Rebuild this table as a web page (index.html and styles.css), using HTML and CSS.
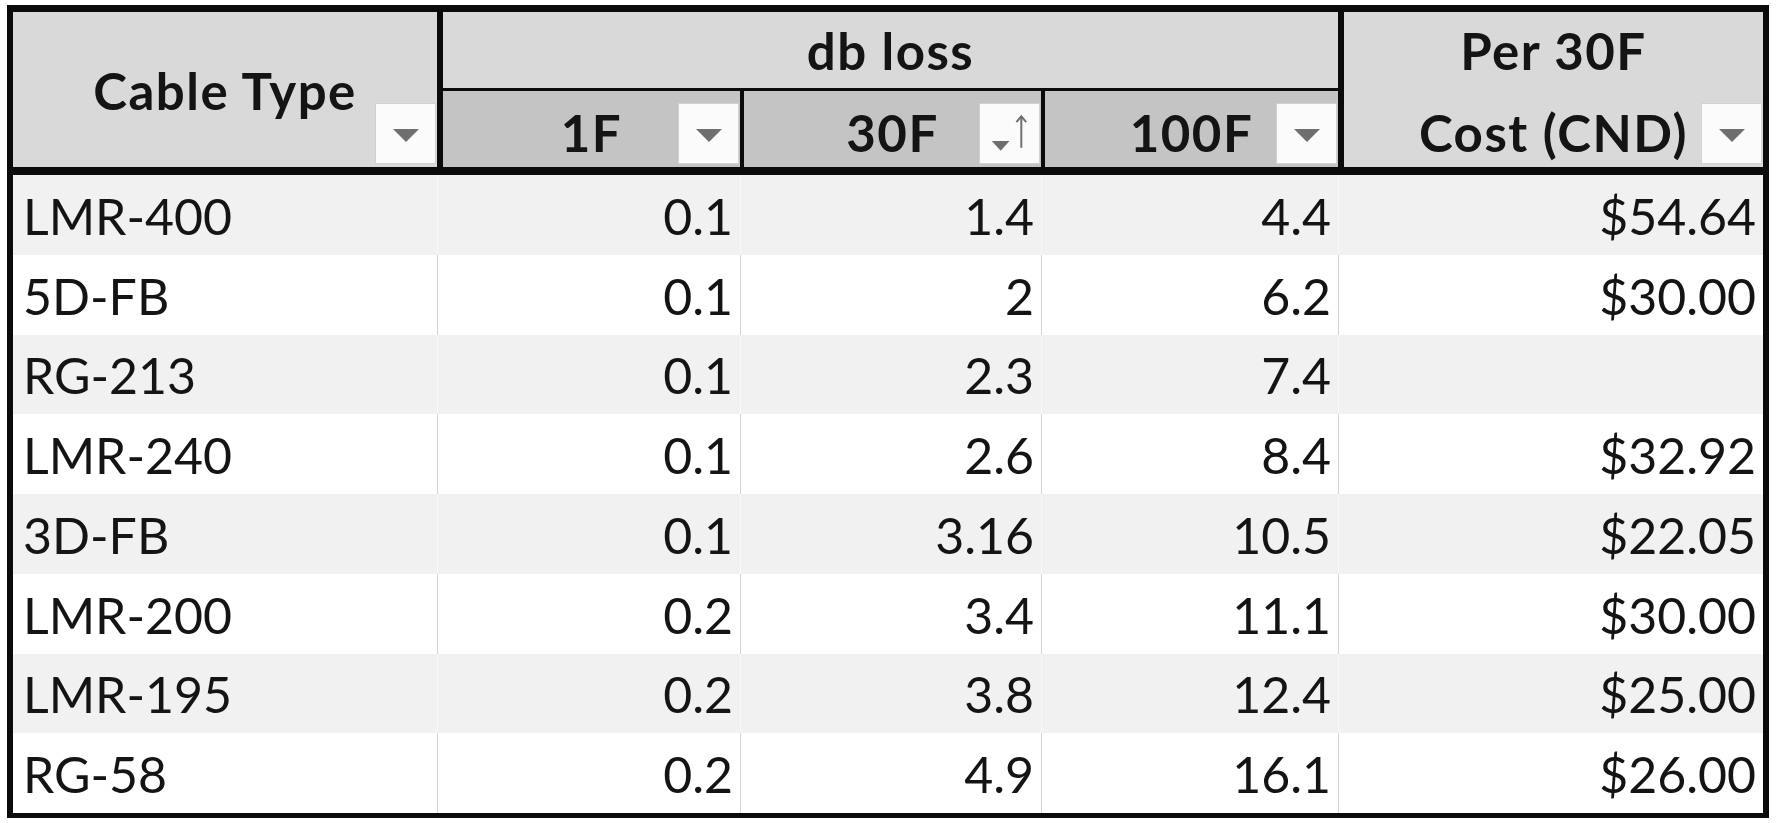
FILE: index.html
```html
<!DOCTYPE html>
<html lang="en">
<head>
<meta charset="utf-8">
<title>Cable loss table</title>
<link rel="stylesheet" href="styles.css">
</head>
<body>
<div class="sheet">
  <div class="tbl">
    <div class="head">
      <div class="h h-type">
        <span>Cable Type</span>
        <span class="filter"><svg class="tri" viewBox="0 0 26 13" width="26" height="13"><polygon points="0,0 26,0 13,13"/></svg></span>
      </div>
      <div class="h h-group">db loss</div>
      <div class="h h-sub h-first">
        <span>1F</span>
        <span class="filter"><svg class="tri" viewBox="0 0 26 13" width="26" height="13"><polygon points="0,0 26,0 13,13"/></svg></span>
      </div>
      <div class="h h-sub">
        <span>30F</span>
        <span class="filter"><svg class="sort" viewBox="0 0 60 61" width="60" height="61"><polygon points="12,38 30,38 21,48"/><line x1="42" y1="13" x2="42" y2="45"/><polyline points="37,19 42,13 47,19"/></svg></span>
      </div>
      <div class="h h-sub">
        <span>100F</span>
        <span class="filter"><svg class="tri" viewBox="0 0 26 13" width="26" height="13"><polygon points="0,0 26,0 13,13"/></svg></span>
      </div>
      <div class="h h-cost">
        <span>Per 30F<br>Cost (CND)</span>
        <span class="filter"><svg class="tri" viewBox="0 0 26 13" width="26" height="13"><polygon points="0,0 26,0 13,13"/></svg></span>
      </div>
    </div>
    <div class="body">
      <div class="row band"><div class="c name">LMR-400</div><div class="c num">0.1</div><div class="c num">1.4</div><div class="c num">4.4</div><div class="c num">$54.64</div></div>
      <div class="row"><div class="c name">5D-FB</div><div class="c num">0.1</div><div class="c num">2</div><div class="c num">6.2</div><div class="c num">$30.00</div></div>
      <div class="row band"><div class="c name">RG-213</div><div class="c num">0.1</div><div class="c num">2.3</div><div class="c num">7.4</div><div class="c num"></div></div>
      <div class="row"><div class="c name">LMR-240</div><div class="c num">0.1</div><div class="c num">2.6</div><div class="c num">8.4</div><div class="c num">$32.92</div></div>
      <div class="row band"><div class="c name">3D-FB</div><div class="c num">0.1</div><div class="c num">3.16</div><div class="c num">10.5</div><div class="c num">$22.05</div></div>
      <div class="row"><div class="c name">LMR-200</div><div class="c num">0.2</div><div class="c num">3.4</div><div class="c num">11.1</div><div class="c num">$30.00</div></div>
      <div class="row band"><div class="c name">LMR-195</div><div class="c num">0.2</div><div class="c num">3.8</div><div class="c num">12.4</div><div class="c num">$25.00</div></div>
      <div class="row"><div class="c name">RG-58</div><div class="c num">0.2</div><div class="c num">4.9</div><div class="c num">16.1</div><div class="c num">$26.00</div></div>
    </div>
  </div>
</div>
</body>
</html>
```

FILE: styles.css
```css
* { box-sizing: border-box; }

html, body {
  margin: 0;
  padding: 0;
  background: #ffffff;
}

body {
  font-family: "Lato", "Open Sans", "Liberation Sans", sans-serif;
  color: #141414;
}

.sheet {
  padding: 5px 0 0 7px;
}

.tbl {
  width: 1762px;
  border-style: solid;
  border-color: #0b0b0b;
  border-width: 7px 6px 5px 6px;
}

.head {
  display: grid;
  grid-template-columns: 424px 303px 301px 297px 425px;
  grid-template-rows: 79px 76px;
  border-bottom: 8px solid #0b0b0b;
}

.h {
  position: relative;
  display: flex;
  align-items: center;
  justify-content: center;
  font-weight: 700;
  font-size: 51px;
  letter-spacing: 1.5px;
  line-height: 60px;
  text-align: center;
}

.h-type {
  grid-row: 1 / 3;
  grid-column: 1;
  background: #d9d9d9;
  padding-top: 3px;
}

.h-group {
  grid-row: 1;
  grid-column: 2 / 5;
  background: #d9d9d9;
  border-left: 6px solid #0b0b0b;
  border-bottom: 3px solid #0b0b0b;
  padding-top: 1px;
}

.h-sub {
  grid-row: 2;
  background: #c4c4c4;
  border-left: 4px solid #0b0b0b;
  padding-top: 8px;
}

.h-first {
  border-left-width: 6px;
}

.h-cost {
  grid-row: 1 / 3;
  grid-column: 5;
  background: #d9d9d9;
  border-left: 6px solid #0b0b0b;
  line-height: 82px;
  padding-top: 5px;
}

.filter {
  position: absolute;
  right: 1px;
  bottom: 3px;
  width: 61px;
  height: 61px;
  background: #fbfbfb;
  border: 1px solid #d2d2d2;
  display: flex;
  align-items: center;
  justify-content: center;
}

.tri {
  display: block;
  margin-top: 4px;
}

.tri polygon {
  fill: #6f6f6f;
}

.sort {
  display: block;
}

.sort polygon {
  fill: #6f6f6f;
}

.sort line,
.sort polyline {
  stroke: #6f6f6f;
  stroke-width: 2;
  fill: none;
}

.body {
  display: grid;
  grid-auto-rows: 79.75px;
}

.row {
  display: grid;
  grid-template-columns: 424px 303px 301px 297px 425px;
  background: #ffffff;
}

.row.band {
  background: #f1f1f1;
}

.c {
  display: flex;
  align-items: center;
  font-size: 50px;
  line-height: 60px;
  padding-top: 2px;
  white-space: nowrap;
  border-left: 1px solid #d3d3d3;
}

.row.band .c {
  border-left-color: #f8f8f8;
}

.c.name {
  border-left: none;
  padding-left: 10px;
  justify-content: flex-start;
}

.c.num {
  justify-content: flex-end;
  padding-right: 7px;
}
```
